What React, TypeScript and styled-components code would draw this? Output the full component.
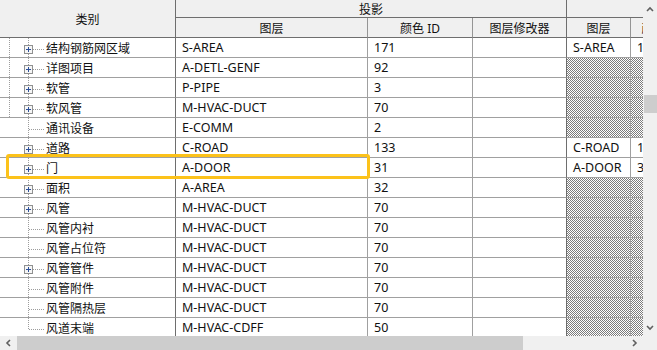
import React from 'react';
import styled, { createGlobalStyle, css } from 'styled-components';

const Global = createGlobalStyle`
  html, body { margin: 0; padding: 0; background: #ffffff; }
  body { font-family: "Noto Sans", "Noto Sans CJK SC", sans-serif; }
`;

const DARK = '#6e6e6e';
const MID = '#959595';
const LIGHT = '#a0a0a0';

type Line = 'dark' | 'mid' | 'light' | 'none';
const lineColor = (l?: Line) => (l === 'dark' ? DARK : l === 'mid' ? MID : l === 'none' ? 'transparent' : LIGHT);

const Frame = styled.div`
  width: 657px;
  height: 350px;
  display: flex;
  flex-direction: column;
  overflow: hidden;
  background: #ffffff;
`;

const TopArea = styled.div`
  display: flex;
  height: 336px;
`;

const Viewport = styled.div`
  position: relative;
  width: 643px;
  height: 336px;
  overflow: hidden;
`;

const Grid = styled.div`
  display: grid;
  grid-template-columns: 176px 192px 105px 94px 64px 62px;
  grid-template-rows: 18px 20px;
  grid-auto-rows: 20px;
  width: 693px;
`;

const Head = styled.div<{ $col?: string; $row?: string; $right?: Line }>`
  grid-column: ${(p) => p.$col ?? 'auto'};
  grid-row: ${(p) => p.$row ?? 'auto'};
  box-sizing: border-box;
  background: #f0f0f0;
  border-bottom: 1px solid ${DARK};
  border-right: 1px solid ${(p) => lineColor(p.$right ?? 'dark')};
  display: flex;
  align-items: center;
  justify-content: center;
  font-size: 12px;
  color: #111111;
  white-space: nowrap;
  overflow: hidden;
`;

const Cell = styled.div<{ $hatch?: boolean; $right?: Line }>`
  box-sizing: border-box;
  border-bottom: 1px solid ${LIGHT};
  border-right: 1px solid ${(p) => lineColor(p.$right)};
  padding-left: 6px;
  display: flex;
  align-items: center;
  font-size: 12.5px;
  color: #111111;
  white-space: nowrap;
  overflow: hidden;
  ${(p) =>
    p.$hatch &&
    css`
      background: repeating-conic-gradient(#7c7c7c 0 25%, #ffffff 0 50%) 0 0 / 2px 2px;
    `}
`;

const CategoryCell = styled.div`
  box-sizing: border-box;
  border-bottom: 1px solid ${LIGHT};
  border-right: 1px solid ${DARK};
  display: flex;
  align-items: center;
  white-space: nowrap;
  overflow: hidden;
`;

const TreeGutter = styled.svg`
  flex: none;
  display: block;
  width: 45px;
  height: 19px;
`;

const CategoryLabel = styled.span`
  font-size: 12px;
  color: #111111;
  padding-left: 1px;
`;

const Highlight = styled.div`
  position: absolute;
  left: 6px;
  top: 154px;
  width: 364px;
  height: 25px;
  box-sizing: border-box;
  border: 3px solid #fcc21a;
  border-radius: 3px;
  pointer-events: none;
`;

const VScroll = styled.div`
  position: relative;
  width: 14px;
  height: 336px;
  background: #f0f0f0;
  display: flex;
  flex-direction: column;
  justify-content: space-between;
  align-items: center;
`;

const VThumb = styled.div`
  position: absolute;
  left: 1px;
  right: 0;
  height: 18px;
  background: #cdcdcd;
`;

const BottomArea = styled.div`
  display: flex;
  height: 14px;
`;

const HScroll = styled.div`
  position: relative;
  width: 643px;
  height: 14px;
  background: #f0f0f0;
  display: flex;
  align-items: center;
  justify-content: space-between;
`;

const HThumb = styled.div`
  position: absolute;
  top: 0;
  bottom: 0;
  background: #cdcdcd;
`;

const Corner = styled.div`
  width: 14px;
  height: 14px;
  background: #f0f0f0;
`;

const ArrowBox = styled.div<{ $w: number; $h: number }>`
  width: ${(p) => p.$w}px;
  height: ${(p) => p.$h}px;
  display: flex;
  align-items: center;
  justify-content: center;
  position: relative;
  z-index: 1;
`;

const Chevron: React.FC<{ dir: 'up' | 'down' | 'left' | 'right' }> = ({ dir }) => {
  const pts = {
    up: '1,5 4,2 7,5',
    down: '1,1 4,4 7,1',
    left: '5,1 2,4 5,7',
    right: '2,1 5,4 2,7',
  }[dir];
  const vertical = dir === 'up' || dir === 'down';
  return (
    <svg width={vertical ? 8 : 7} height={vertical ? 6 : 8} viewBox={vertical ? '0 0 8 6' : '0 0 7 8'}>
      <polyline points={pts} fill="none" stroke="#606060" strokeWidth="1.6" />
    </svg>
  );
};

const DOT = '#9c9c9c';

const Tree: React.FC<{ expand: boolean; last: boolean; outer: boolean }> = ({ expand, last, outer }) => (
  <TreeGutter viewBox="0 0 45 19" shapeRendering="crispEdges">
    {outer && <line x1="9.5" y1="0" x2="9.5" y2="19" stroke={DOT} strokeDasharray="1 1" />}
    <line x1="28.5" y1="0" x2="28.5" y2={last ? 12 : 19} stroke={DOT} strokeDasharray="1 1" />
    <line x1="29" y1="11.5" x2="44" y2="11.5" stroke={DOT} strokeDasharray="1 1" />
    {expand && (
      <g>
        <rect x="24.5" y="7.5" width="8" height="8" fill="#f6f6f6" stroke="#8f9090" />
        <line x1="26" y1="11.5" x2="31" y2="11.5" stroke="#2b4e98" />
        <line x1="28.5" y1="9" x2="28.5" y2="14" stroke="#2b4e98" />
      </g>
    )}
  </TreeGutter>
);

type Row = {
  name: string;
  expand: boolean;
  layer: string;
  color: string;
  cut?: { layer: string; color: string };
};

const rows: Row[] = [
  { name: '结构钢筋网区域', expand: true, layer: 'S-AREA', color: '171', cut: { layer: 'S-AREA', color: '171' } },
  { name: '详图项目', expand: true, layer: 'A-DETL-GENF', color: '92' },
  { name: '软管', expand: true, layer: 'P-PIPE', color: '3' },
  { name: '软风管', expand: true, layer: 'M-HVAC-DUCT', color: '70' },
  { name: '通讯设备', expand: false, layer: 'E-COMM', color: '2' },
  { name: '道路', expand: true, layer: 'C-ROAD', color: '133', cut: { layer: 'C-ROAD', color: '133' } },
  { name: '门', expand: true, layer: 'A-DOOR', color: '31', cut: { layer: 'A-DOOR', color: '31' } },
  { name: '面积', expand: true, layer: 'A-AREA', color: '32' },
  { name: '风管', expand: true, layer: 'M-HVAC-DUCT', color: '70' },
  { name: '风管内衬', expand: false, layer: 'M-HVAC-DUCT', color: '70' },
  { name: '风管占位符', expand: false, layer: 'M-HVAC-DUCT', color: '70' },
  { name: '风管管件', expand: true, layer: 'M-HVAC-DUCT', color: '70' },
  { name: '风管附件', expand: false, layer: 'M-HVAC-DUCT', color: '70' },
  { name: '风管隔热层', expand: false, layer: 'M-HVAC-DUCT', color: '70' },
  { name: '风道末端', expand: false, layer: 'M-HVAC-CDFF', color: '50' },
];

export default function App() {
  return (
    <>
      <Global />
      <Frame>
        <TopArea>
          <Viewport>
            <Grid>
              <Head $col="1" $row="1 / span 2">类别</Head>
              <Head $col="2 / span 3" $row="1">投影</Head>
              <Head $col="5 / span 2" $row="1" $right="none" />
              <Head $col="2" $row="2" $right="mid">图层</Head>
              <Head $col="3" $row="2" $right="mid">颜色 ID</Head>
              <Head $col="4" $row="2">图层修改器</Head>
              <Head $col="5" $row="2" $right="mid">图层</Head>
              <Head $col="6" $row="2" $right="none">颜色 ID</Head>
              {rows.map((r, i) => (
                <React.Fragment key={r.name}>
                  <CategoryCell>
                    <Tree expand={r.expand} last={i === rows.length - 1} outer={i < 4} />
                    <CategoryLabel>{r.name}</CategoryLabel>
                  </CategoryCell>
                  <Cell>{r.layer}</Cell>
                  <Cell>{r.color}</Cell>
                  <Cell $right="dark" />
                  <Cell $hatch={!r.cut}>{r.cut?.layer}</Cell>
                  <Cell $hatch={!r.cut} $right="none">{r.cut?.color}</Cell>
                </React.Fragment>
              ))}
            </Grid>
            <Highlight />
          </Viewport>
          <VScroll>
            <ArrowBox $w={14} $h={17}>
              <Chevron dir="up" />
            </ArrowBox>
            <VThumb style={{ top: 95 }} />
            <ArrowBox $w={14} $h={17}>
              <Chevron dir="down" />
            </ArrowBox>
          </VScroll>
        </TopArea>
        <BottomArea>
          <HScroll>
            <ArrowBox $w={17} $h={14}>
              <Chevron dir="left" />
            </ArrowBox>
            <HThumb style={{ left: 17, width: 506 }} />
            <ArrowBox $w={17} $h={14}>
              <Chevron dir="right" />
            </ArrowBox>
          </HScroll>
          <Corner />
        </BottomArea>
      </Frame>
    </>
  );
}
